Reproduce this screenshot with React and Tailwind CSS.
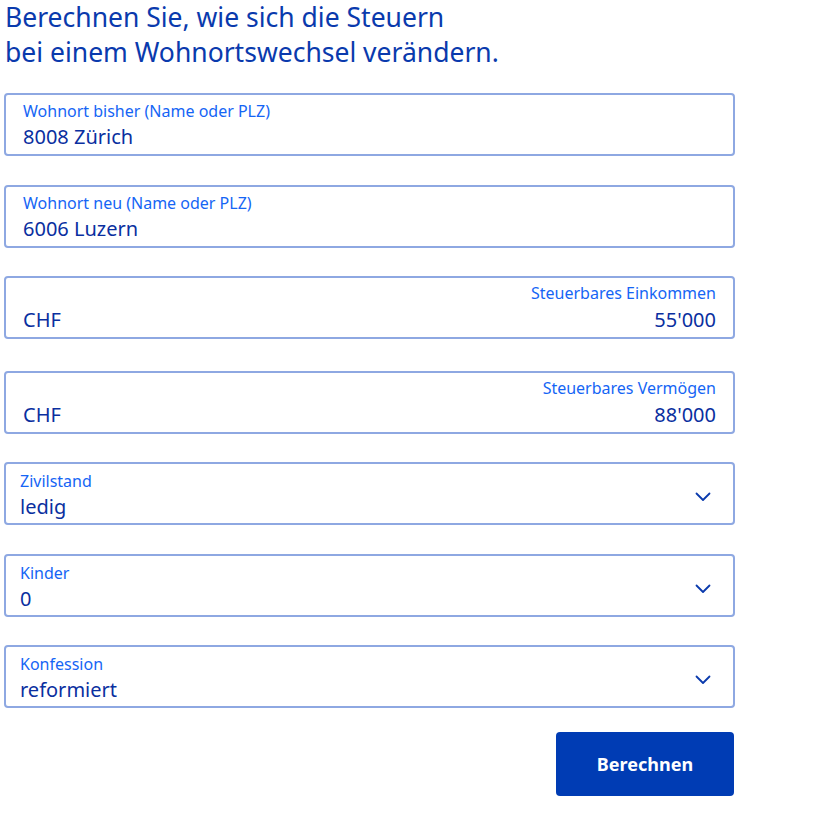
import React, { useState } from "react";

const font = { fontFamily: '"Noto Sans", "Open Sans", Arial, sans-serif' };

const Chevron = () => (
  <svg width="16" height="10" viewBox="0 0 16 10" fill="none">
    <path d="M1.5 1.5 L8 8 L14.5 1.5" stroke="#0a3aad" strokeWidth="1.8" strokeLinecap="round" strokeLinejoin="round" />
  </svg>
);

const TextField = ({ label, value, className = "" }) => (
  <div className={`h-[63px] border-2 border-[#8ea8e2] rounded-[4px] px-[17px] pt-[6px] flex flex-col ${className}`}>
    <span className="text-[16px] leading-[20px] text-[#1565f5]">{label}</span>
    <span className="text-[20px] leading-[31px] text-[#0a2f9f]">{value}</span>
  </div>
);

const AmountField = ({ label, value, className = "" }) => (
  <div className={`h-[63px] border-2 border-[#8ea8e2] rounded-[4px] px-[17px] pt-[5px] flex flex-col ${className}`}>
    <span className="text-[16px] leading-[20px] text-[#1565f5] text-right">{label}</span>
    <div className="flex justify-between text-[20px] leading-[33px] text-[#0a2f9f]">
      <span>CHF</span>
      <span>{value}</span>
    </div>
  </div>
);

const SelectField = ({ label, value, className = "" }) => (
  <div className={`h-[63px] border-2 border-[#8ea8e2] rounded-[4px] pl-[14px] pr-[22px] flex items-center justify-between ${className}`}>
    <div className="flex flex-col self-start pt-[7px]">
      <span className="text-[16px] leading-[20px] text-[#1565f5]">{label}</span>
      <span className="text-[20px] leading-[31px] text-[#0a2f9f]">{value}</span>
    </div>
    <div className="pt-[6px]">
      <Chevron />
    </div>
  </div>
);

export default function App() {
  const [form] = useState({
    bisher: "8008 Zürich",
    neu: "6006 Luzern",
    einkommen: "55'000",
    vermoegen: "88'000",
    zivilstand: "ledig",
    kinder: "0",
    konfession: "reformiert",
  });

  return (
    <div className="bg-white min-h-screen" style={font}>
      <div className="w-[731px] ml-[4px]">
        <h1 className="text-[26.5px] leading-[35px] text-[#0a3aad] pl-[1px]">
          Berechnen Sie, wie sich die Steuern
          <br />
          bei einem Wohnortswechsel verändern.
        </h1>

        <div className="flex flex-col mt-[23px]">
          <TextField label="Wohnort bisher (Name oder PLZ)" value={form.bisher} />
          <TextField label="Wohnort neu (Name oder PLZ)" value={form.neu} className="mt-[29px]" />
          <AmountField label="Steuerbares Einkommen" value={form.einkommen} className="mt-[28px]" />
          <AmountField label="Steuerbares Vermögen" value={form.vermoegen} className="mt-[32px]" />
          <SelectField label="Zivilstand" value={form.zivilstand} className="mt-[28px]" />
          <SelectField label="Kinder" value={form.kinder} className="mt-[29px]" />
          <SelectField label="Konfession" value={form.konfession} className="mt-[28px]" />
        </div>

        <div className="flex justify-end mt-[24px]">
          <button className="w-[178px] h-[64px] bg-[#003cb4] text-white text-[18px] font-bold rounded-[4px] mr-[1px]">
            Berechnen
          </button>
        </div>
      </div>
    </div>
  );
}
